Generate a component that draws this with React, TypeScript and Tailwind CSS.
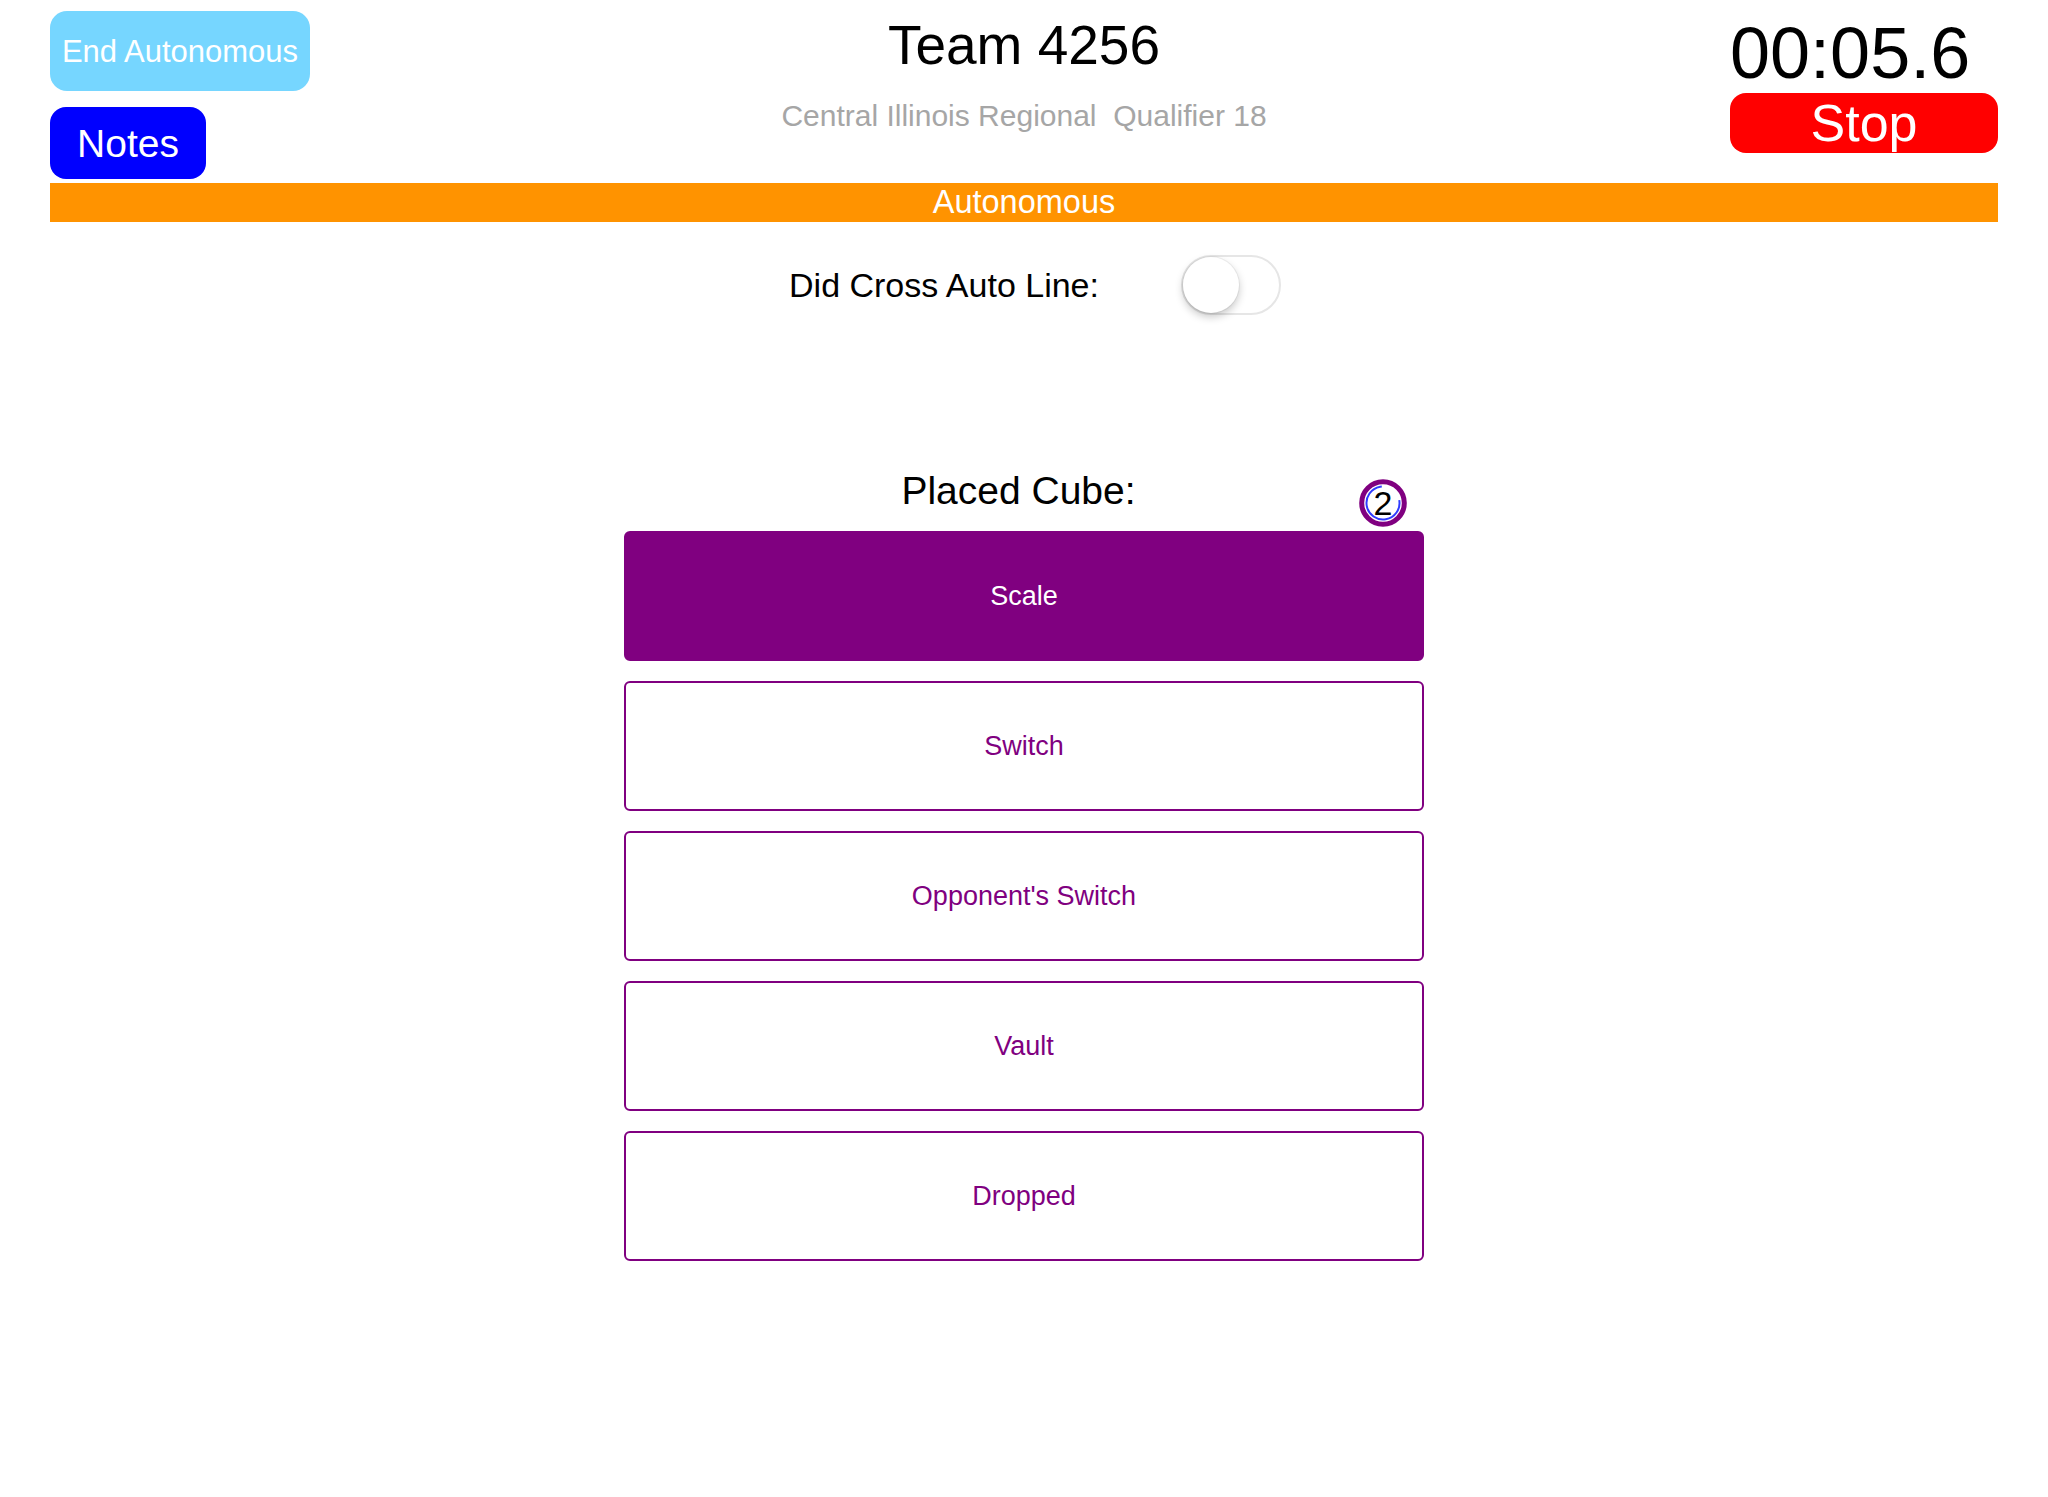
import { useState } from "react";

const targets = ["Scale", "Switch", "Opponent's Switch", "Vault", "Dropped"];

function CountBadge({ count }: { count: number }) {
  // purple ring with a blue progress arc inside
  return (
    <div className="absolute right-[17px] top-[8px] h-[48px] w-[48px]">
      <svg width="48" height="48" viewBox="0 0 48 48" className="absolute inset-0">
        <circle cx="24" cy="24" r="21.3" fill="white" stroke="#800080" strokeWidth="5" />
        <circle
          cx="24"
          cy="24"
          r="16.5"
          fill="none"
          stroke="#2f3bff"
          strokeWidth="2"
          strokeDasharray="79 25"
          transform="rotate(-10 24 24)"
        />
      </svg>
      <span className="absolute inset-0 flex items-center justify-center text-[34px] leading-none text-black">
        {count}
      </span>
    </div>
  );
}

export default function App() {
  const [crossed, setCrossed] = useState(false);
  const [selected, setSelected] = useState("Scale");

  return (
    <div
      className="min-h-[1497px] w-full bg-white px-[50px] pt-[11px]"
      style={{ fontFamily: '"Liberation Sans", Arial, sans-serif' }}
    >
      {/* Header */}
      <div className="grid grid-cols-[1fr_auto_1fr]">
        <div className="flex flex-col items-start gap-[16px]">
          <button className="flex h-[80px] w-[260px] items-center justify-center rounded-[17px] bg-[#76d6ff] text-[31px] leading-none text-white">
            End Autonomous
          </button>
          <button className="flex h-[72px] w-[156px] items-center justify-center rounded-[16px] bg-[#0000ff] text-[39px] leading-none text-white">
            Notes
          </button>
        </div>

        <div className="flex flex-col items-center pt-[7px]">
          <h1 className="text-[55px] leading-none text-black">Team 4256</h1>
          <p className="mt-[28px] text-[30px] leading-none whitespace-pre text-[#a6a6a6]">
            {"Central Illinois Regional  Qualifier 18"}
          </p>
        </div>

        <div className="flex justify-end">
          <div className="flex w-[268px] flex-col items-start pt-[6px]">
            <div className="text-[72px] leading-none text-black">00:05.6</div>
            <button className="mt-[4px] flex h-[60px] w-[268px] items-center justify-center rounded-[16px] bg-[#ff0000] text-[52px] leading-none text-white">
              Stop
            </button>
          </div>
        </div>
      </div>

      {/* Phase bar */}
      <div className="mt-[4px] flex h-[39px] items-center justify-center bg-[#ff9300] text-[32.5px] leading-none text-white">
        Autonomous
      </div>

      {/* Auto line toggle */}
      <div className="mt-[33px] flex items-center justify-center gap-[82px] pl-[22px]">
        <span className="text-[34px] leading-none text-black">Did Cross Auto Line:</span>
        <button
          onClick={() => setCrossed(!crossed)}
          className={`relative h-[60px] w-[100px] rounded-full border-2 ${
            crossed ? "border-[#4cd964] bg-[#4cd964]" : "border-[#e6e6e6] bg-white"
          }`}
        >
          <span
            className={`absolute top-[0px] h-[56px] w-[56px] rounded-full bg-white shadow-[0_4px_8px_rgba(0,0,0,0.22),0_0_0_1px_rgba(0,0,0,0.05)] ${
              crossed ? "left-[40px]" : "left-[0px]"
            }`}
          />
        </button>
      </div>

      {/* Placed cube */}
      <div className="mx-auto mt-[156px] w-[800px]">
        <div className="relative h-[60px]">
          <div className="pr-[11px] text-center text-[39px] leading-none text-black">Placed Cube:</div>
          <CountBadge count={2} />
        </div>
        <div className="flex flex-col gap-[20px]">
          {targets.map((t) => (
            <button
              key={t}
              onClick={() => setSelected(t)}
              className={`flex h-[130px] w-full items-center justify-center rounded-[6px] border-2 border-[#800080] text-[27px] leading-none ${
                selected === t ? "bg-[#800080] text-white" : "bg-white text-[#800080]"
              }`}
            >
              {t}
            </button>
          ))}
        </div>
      </div>
    </div>
  );
}
